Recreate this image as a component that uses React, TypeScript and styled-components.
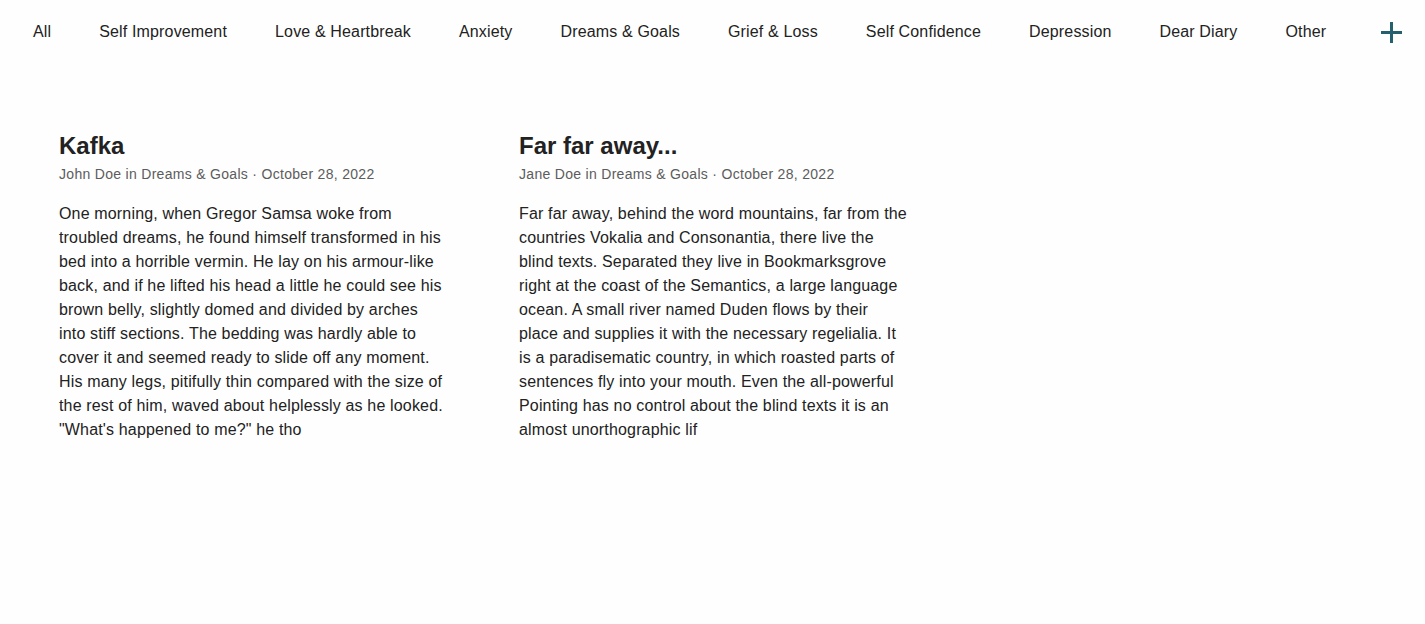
import React from "react";
import styled, { createGlobalStyle } from "styled-components";

const Global = createGlobalStyle`
  html, body { margin: 0; padding: 0; background: #fefefe; }
  body { font-family: "Liberation Sans", Arial, Helvetica, sans-serif; color: #222; }
  * { box-sizing: border-box; }
`;

const Nav = styled.nav`
  display: flex;
  align-items: center;
  height: 62px;
  padding: 2px 23px 0 33px;
  gap: 48px;
`;

const NavItem = styled.a`
  font-size: 16px;
  letter-spacing: 0.15px;
  color: #222;
  text-decoration: none;
  white-space: nowrap;
  cursor: pointer;
`;

const AddButton = styled.button`
  margin-left: auto;
  width: 21px;
  height: 21px;
  padding: 0;
  border: none;
  background: transparent;
  display: flex;
  align-items: center;
  justify-content: center;
  cursor: pointer;
`;

const Posts = styled.main`
  display: grid;
  grid-template-columns: repeat(2, 388px);
  column-gap: 72px;
  padding: 70px 0 0 59px;
`;

const Card = styled.article`
  display: flex;
  flex-direction: column;
`;

const Title = styled.h2`
  margin: 0;
  font-size: 24px;
  line-height: 28px;
  font-weight: 700;
  color: #222;
`;

const Meta = styled.div`
  margin-top: 5px;
  font-size: 14px;
  line-height: 18px;
  letter-spacing: 0.3px;
  color: #5c5c5c;
`;

const Body = styled.p`
  margin: 19px 0 0;
  font-size: 16px;
  line-height: 24px;
  letter-spacing: 0.16px;
  color: #222;
`;

const categories = [
  "All",
  "Self Improvement",
  "Love & Heartbreak",
  "Anxiety",
  "Dreams & Goals",
  "Grief & Loss",
  "Self Confidence",
  "Depression",
  "Dear Diary",
  "Other",
];

const posts = [
  {
    title: "Kafka",
    author: "John Doe",
    category: "Dreams & Goals",
    date: "October 28, 2022",
    body:
      "One morning, when Gregor Samsa woke from troubled dreams, he found himself transformed in his bed into a horrible vermin. He lay on his armour-like back, and if he lifted his head a little he could see his brown belly, slightly domed and divided by arches into stiff sections. The bedding was hardly able to cover it and seemed ready to slide off any moment. His many legs, pitifully thin compared with the size of the rest of him, waved about helplessly as he looked. \"What's happened to me?\" he tho",
  },
  {
    title: "Far far away...",
    author: "Jane Doe",
    category: "Dreams & Goals",
    date: "October 28, 2022",
    body:
      "Far far away, behind the word mountains, far from the countries Vokalia and Consonantia, there live the blind texts. Separated they live in Bookmarksgrove right at the coast of the Semantics, a large language ocean. A small river named Duden flows by their place and supplies it with the necessary regelialia. It is a paradisematic country, in which roasted parts of sentences fly into your mouth. Even the all-powerful Pointing has no control about the blind texts it is an almost unorthographic lif",
  },
];

export default function App() {
  return (
    <>
      <Global />
      <Nav>
        {categories.map((c) => (
          <NavItem key={c}>{c}</NavItem>
        ))}
        <AddButton aria-label="New post">
          <svg width="21" height="21" viewBox="0 0 21 21">
            <rect x="9" y="0" width="3" height="21" fill="#25606e" />
            <rect x="0" y="9" width="21" height="3" fill="#25606e" />
          </svg>
        </AddButton>
      </Nav>
      <Posts>
        {posts.map((p) => (
          <Card key={p.title}>
            <Title>{p.title}</Title>
            <Meta>
              {p.author} in {p.category} · {p.date}
            </Meta>
            <Body>{p.body}</Body>
          </Card>
        ))}
      </Posts>
    </>
  );
}
